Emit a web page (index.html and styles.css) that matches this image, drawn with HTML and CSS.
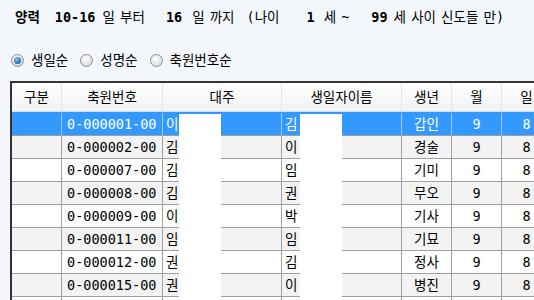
FILE: index.html
```html
<!DOCTYPE html>
<html lang="ko">
<head>
    <meta charset="UTF-8">
    <meta name="viewport" content="width=device-width, initial-scale=1.0">
    <title>축원 목록</title>
    <link rel="stylesheet" href="styles.css">
</head>
<body>
    <div class="filter-line">
        <b class="f-yang">양력</b>
        <b class="f-from">10-16</b>
        <span class="f-buteo">일 부터</span>
        <b class="f-to">16</b>
        <span class="f-kkaji">일 까지</span>
        <span class="f-nai">(나이</span>
        <b class="f-min">1</b>
        <span class="f-se">세 ~</span>
        <b class="f-max">99</b>
        <span class="f-tail">세 사이 신도들 만)</span>
    </div>

    <div class="sort-line">
        <label class="opt"><span class="radio checked"></span>생일순</label>
        <label class="opt"><span class="radio"></span>성명순</label>
        <label class="opt"><span class="radio"></span>축원번호순</label>
    </div>

    <div class="list">
        <div class="list-row list-head">
            <div class="cell">구분</div>
            <div class="cell">축원번호</div>
            <div class="cell">대주</div>
            <div class="cell">생일자이름</div>
            <div class="cell">생년</div>
            <div class="cell">월</div>
            <div class="cell">일</div>
        </div>
        <div class="list-row selected">
            <div class="cell"></div>
            <div class="cell c-no">0-000001-00</div>
            <div class="cell c-name">이</div>
            <div class="cell c-name">김</div>
            <div class="cell c-mid">갑인</div>
            <div class="cell c-mid">9</div>
            <div class="cell c-mid">8</div>
        </div>
        <div class="list-row alt">
            <div class="cell"></div>
            <div class="cell c-no">0-000002-00</div>
            <div class="cell c-name">김</div>
            <div class="cell c-name">이</div>
            <div class="cell c-mid">경술</div>
            <div class="cell c-mid">9</div>
            <div class="cell c-mid">8</div>
        </div>
        <div class="list-row">
            <div class="cell"></div>
            <div class="cell c-no">0-000007-00</div>
            <div class="cell c-name">김</div>
            <div class="cell c-name">임</div>
            <div class="cell c-mid">기미</div>
            <div class="cell c-mid">9</div>
            <div class="cell c-mid">8</div>
        </div>
        <div class="list-row alt">
            <div class="cell"></div>
            <div class="cell c-no">0-000008-00</div>
            <div class="cell c-name">김</div>
            <div class="cell c-name">권</div>
            <div class="cell c-mid">무오</div>
            <div class="cell c-mid">9</div>
            <div class="cell c-mid">8</div>
        </div>
        <div class="list-row">
            <div class="cell"></div>
            <div class="cell c-no">0-000009-00</div>
            <div class="cell c-name">이</div>
            <div class="cell c-name">박</div>
            <div class="cell c-mid">기사</div>
            <div class="cell c-mid">9</div>
            <div class="cell c-mid">8</div>
        </div>
        <div class="list-row alt">
            <div class="cell"></div>
            <div class="cell c-no">0-000011-00</div>
            <div class="cell c-name">임</div>
            <div class="cell c-name">임</div>
            <div class="cell c-mid">기묘</div>
            <div class="cell c-mid">9</div>
            <div class="cell c-mid">8</div>
        </div>
        <div class="list-row">
            <div class="cell"></div>
            <div class="cell c-no">0-000012-00</div>
            <div class="cell c-name">권</div>
            <div class="cell c-name">김</div>
            <div class="cell c-mid">정사</div>
            <div class="cell c-mid">9</div>
            <div class="cell c-mid">8</div>
        </div>
        <div class="list-row alt">
            <div class="cell"></div>
            <div class="cell c-no">0-000015-00</div>
            <div class="cell c-name">권</div>
            <div class="cell c-name">이</div>
            <div class="cell c-mid">병진</div>
            <div class="cell c-mid">9</div>
            <div class="cell c-mid">8</div>
        </div>
        <!-- 다음 행 (화면 아래로 잘림) -->
        <div class="list-row">
            <div class="cell"></div>
            <div class="cell"></div>
            <div class="cell"></div>
            <div class="cell"></div>
            <div class="cell"></div>
            <div class="cell"></div>
            <div class="cell"></div>
        </div>

        <!-- 개인정보 가림 -->
        <div class="mask mask-daeju"></div>
        <div class="mask mask-name"></div>
    </div>
</body>
</html>
```

FILE: styles.css
```css
html, body {
    height: 300px;
    overflow: hidden;
}
body {
    margin: 0;
    background-color: #f3f6fa;
    font-family: "DejaVu Sans Mono", "Noto Sans CJK KR", monospace;
    font-size: 13.5px;
    color: #000;
}

/* 상단 조건 */
.filter-line {
    display: flex;
    align-items: center;
    height: 18px;
    line-height: 18px;
    padding: 8px 0 0 15px;
    word-spacing: -3px;
    white-space: nowrap;
}
.filter-line b {
    font-weight: bold;
}
.f-from { margin-left: 15px; }
.f-buteo { margin-left: 7px; }
.f-to { margin-left: 21px; }
.f-kkaji { margin-left: 10px; }
.f-nai { margin-left: 12px; }
.f-min { margin-left: 27px; }
.f-se { margin-left: 9px; }
.f-max { margin-left: 22px; }
.f-tail { margin-left: 6px; }

/* 정렬 옵션 */
.sort-line {
    display: flex;
    align-items: center;
    height: 18px;
    line-height: 18px;
    margin-top: 25px;
    padding-left: 11px;
}
.opt {
    display: flex;
    align-items: center;
    gap: 7px;
    margin-right: 12px;
}
.radio {
    width: 11px;
    height: 11px;
    border: 1px solid #8d8f91;
    border-radius: 50%;
    background: radial-gradient(circle at 40% 35%, #ffffff 0%, #e4e5e7 55%, #c9cbce 100%);
    position: relative;
}
.radio.checked::after {
    content: "";
    position: absolute;
    left: 2px;
    top: 2px;
    width: 7px;
    height: 7px;
    border-radius: 50%;
    background: radial-gradient(circle at 40% 35%, #8fd0f5 0%, #2c83c9 50%, #134f8a 100%);
}

/* 목록 */
.list {
    position: relative;
    width: 540px;
    margin: 12px 0 0 10px;
    border-left: 2px solid #333;
    border-top: 2px solid #333;
    background-color: #fff;
}
.list-row {
    display: grid;
    grid-template-columns: 50px 101px 119px 120px 50px 50px 50px;
    height: 23px;
    line-height: 22px;
    border-top: 1px solid #a0a0a0;
    box-sizing: border-box;
    white-space: nowrap;
}
.cell {
    border-right: 1px solid #a0a0a0;
    overflow: hidden;
}
.list-head {
    height: 29px;
    line-height: 28px;
    border-top: none;
    background: linear-gradient(#fefefe, #f1f2f4);
}
.list-head .cell {
    text-align: center;
    border-right: 1px solid #e3e4e6;
    border-bottom: 1px solid #dcdde0;
}
.list-row.alt {
    background-color: #f3f3f3;
}
.list-row.selected {
    background-color: #3399ff;
    border-top-color: #3399ff;
    color: #fff;
}
.list-row.selected .cell {
    border-right-color: #a9c9ea;
}
.c-no {
    padding-left: 5px;
}
.c-name {
    padding-left: 3px;
}
.c-mid {
    text-align: center;
}

.mask {
    position: absolute;
    top: 31px;
    bottom: 0;
    width: 42px;
    background-color: #fff;
}
.mask-daeju { left: 167px; }
.mask-name { left: 288px; }
```
